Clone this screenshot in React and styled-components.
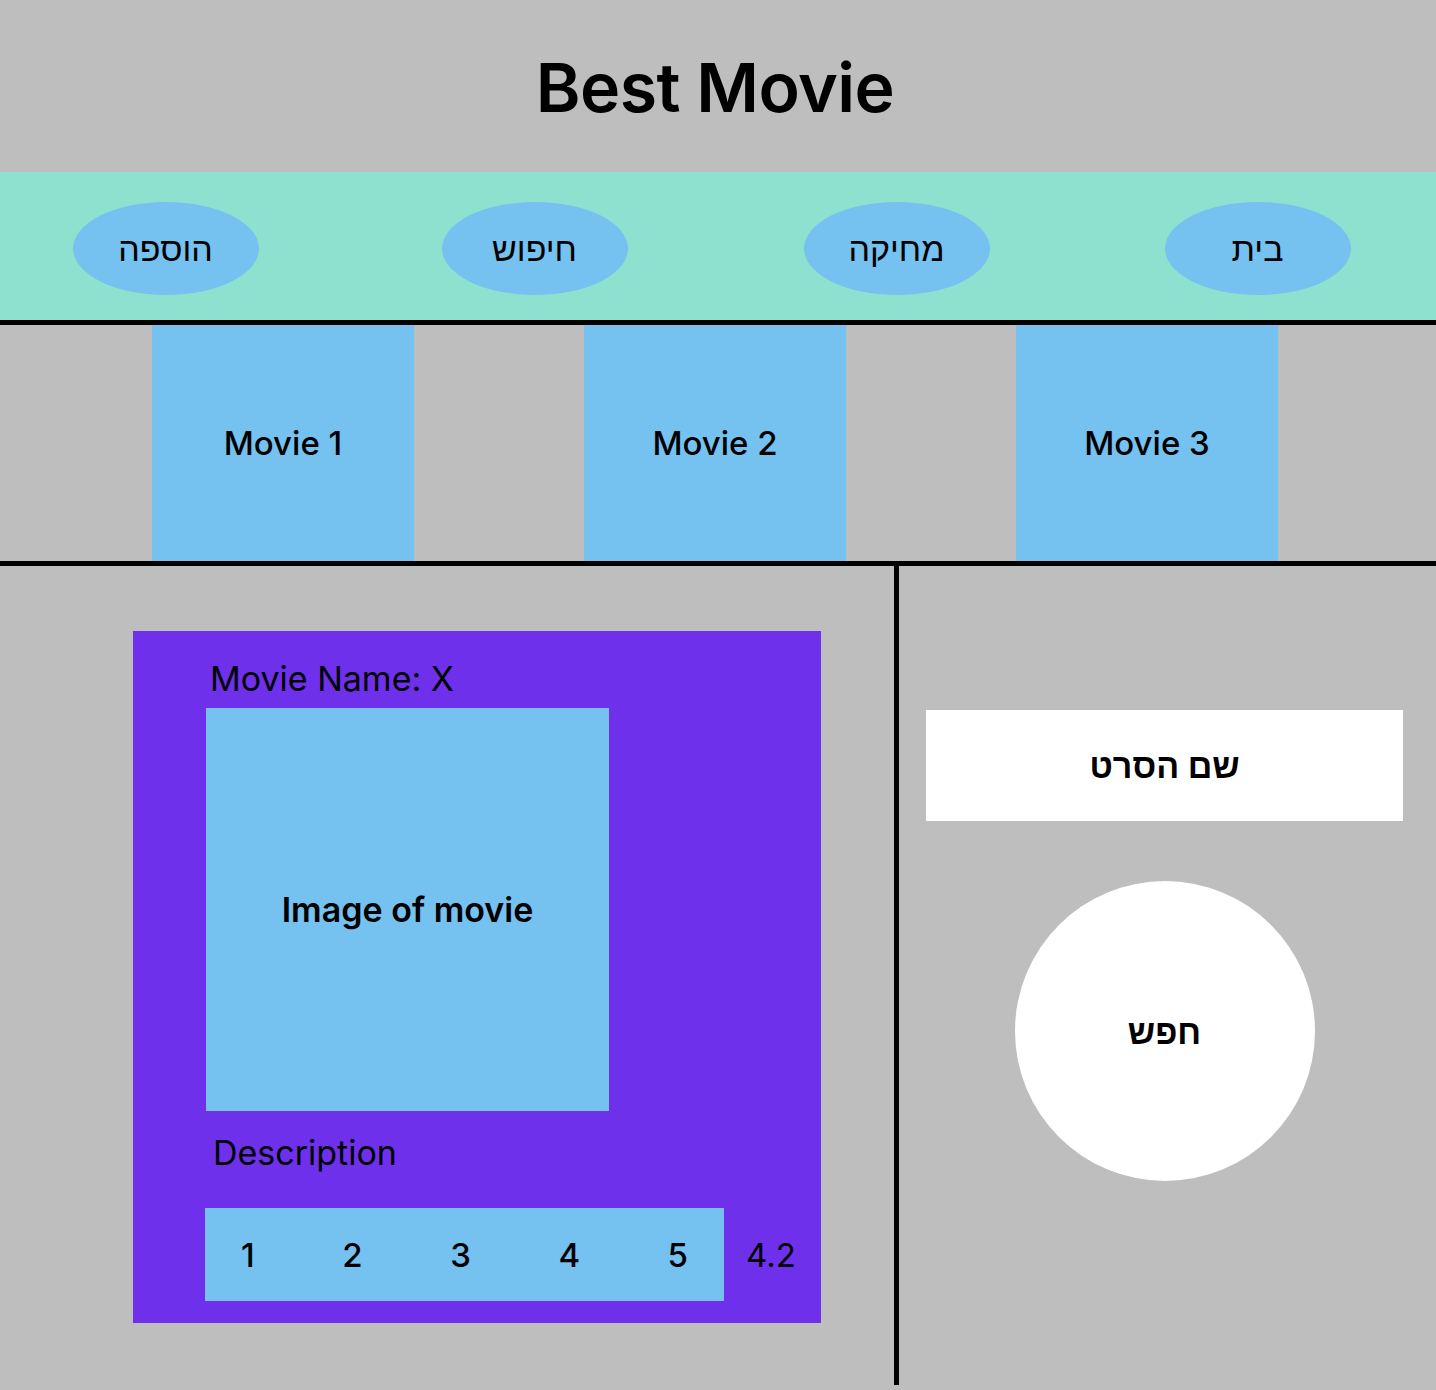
import React from "react";
import styled, { createGlobalStyle } from "styled-components";

const GlobalStyle = createGlobalStyle`
  body {
    margin: 0;
    background-color: #bebebe;
    font-family: Inter, "Liberation Sans", "DejaVu Sans", sans-serif;
    color: #000000;
  }
`;

const navItems = ["בית", "מחיקה", "חיפוש", "הוספה"];
const movies = ["Movie 1", "Movie 2", "Movie 3"];
const stars = [1, 2, 3, 4, 5];

function App() {
  return (
    <>
      <GlobalStyle />
      <Page>
        <Header>
          <Title>Best Movie</Title>
        </Header>
        <Nav>
          {navItems.map((item, i) => (
            <NavCell key={item} $last={i === navItems.length - 1}>
              <NavPill>{item}</NavPill>
            </NavCell>
          ))}
        </Nav>
        <MovieRow>
          {movies.map((m) => (
            <MovieTile key={m}>{m}</MovieTile>
          ))}
        </MovieRow>
        <Bottom>
          <LeftPanel>
            <Card>
              <CardTitle>Movie Name: X</CardTitle>
              <Poster>Image of movie</Poster>
              <Description>Description</Description>
              <RatingRow>
                <RatingBar>
                  {stars.map((s) => (
                    <Star key={s}>{s}</Star>
                  ))}
                </RatingBar>
                <Score>4.2</Score>
              </RatingRow>
            </Card>
          </LeftPanel>
          <RightPanel>
            <SearchInput dir="rtl">שם הסרט</SearchInput>
            <SearchButton>חפש</SearchButton>
          </RightPanel>
        </Bottom>
      </Page>
    </>
  );
}

const Page = styled.div`
  width: 1436px;
  display: flex;
  flex-direction: column;
`;

const Header = styled.header`
  height: 172px;
  display: flex;
  align-items: center;
  justify-content: center;
`;

const Title = styled.h1`
  margin: 0;
  font-size: 68px;
  font-weight: 600;
  letter-spacing: -0.6px;
  transform: translate(-3px, 1px);
`;

const Nav = styled.nav`
  height: 143px;
  padding-top: 5px;
  background-color: #8de1cf;
  border-bottom: 5px solid #000000;
  direction: rtl;
  display: grid;
  grid-template-columns: 357px 365px 359px 1fr;
  align-items: center;
`;

const NavCell = styled.div`
  display: flex;
  justify-content: center;
  padding-right: ${(props) => (props.$last ? "24px" : "0")};
`;

const NavPill = styled.div`
  width: 186px;
  height: 93px;
  border-radius: 50%;
  background-color: #75c1f0;
  display: flex;
  align-items: center;
  justify-content: center;
  font-size: 34px;
  font-weight: 500;
`;

const MovieRow = styled.section`
  height: 236px;
  border-bottom: 5px solid #000000;
  display: flex;
  justify-content: center;
  gap: 170px;
  padding-right: 6px;
`;

const MovieTile = styled.div`
  width: 262px;
  background-color: #75c1f0;
  display: flex;
  align-items: center;
  justify-content: center;
  font-size: 33px;
  font-weight: 500;
`;

const Bottom = styled.section`
  display: flex;
  height: 819px;
`;

const LeftPanel = styled.div`
  width: 899px;
  border-right: 5px solid #000000;
  padding: 65px 0 0 133px;
  box-sizing: border-box;
`;

const Card = styled.div`
  width: 688px;
  height: 692px;
  background-color: #6f30ec;
  box-sizing: border-box;
  padding: 28px 0 0 72px;
  display: flex;
  flex-direction: column;
  align-items: flex-start;
`;

const CardTitle = styled.div`
  font-size: 34px;
  line-height: 40px;
  margin-left: 5px;
`;

const Poster = styled.div`
  width: 403px;
  height: 403px;
  margin-top: 9px;
  margin-left: 1px;
  background-color: #75c1f0;
  display: flex;
  align-items: center;
  justify-content: center;
  font-size: 34px;
  font-weight: 600;
`;

const Description = styled.div`
  font-size: 34px;
  line-height: 40px;
  margin: 22px 0 0 8px;
`;

const RatingRow = styled.div`
  display: flex;
  align-items: center;
  gap: 22px;
  margin-top: 35px;
`;

const RatingBar = styled.div`
  width: 519px;
  height: 93px;
  background-color: #75c1f0;
  display: flex;
  align-items: center;
  justify-content: space-between;
  padding: 0 36px;
  box-sizing: border-box;
`;

const Star = styled.span`
  font-size: 33px;
  font-weight: 500;
`;

const Score = styled.span`
  font-size: 33px;
`;

const RightPanel = styled.div`
  flex: 1;
  display: flex;
  flex-direction: column;
  align-items: center;
  padding: 144px 33px 0 27px;
`;

const SearchInput = styled.div`
  width: 100%;
  height: 111px;
  background-color: #ffffff;
  display: flex;
  align-items: center;
  justify-content: center;
  font-size: 34px;
  font-weight: 600;
`;

const SearchButton = styled.div`
  width: 300px;
  height: 300px;
  margin-top: 60px;
  border-radius: 50%;
  background-color: #ffffff;
  display: flex;
  align-items: center;
  justify-content: center;
  font-size: 34px;
  font-weight: 600;
`;

export default App;
